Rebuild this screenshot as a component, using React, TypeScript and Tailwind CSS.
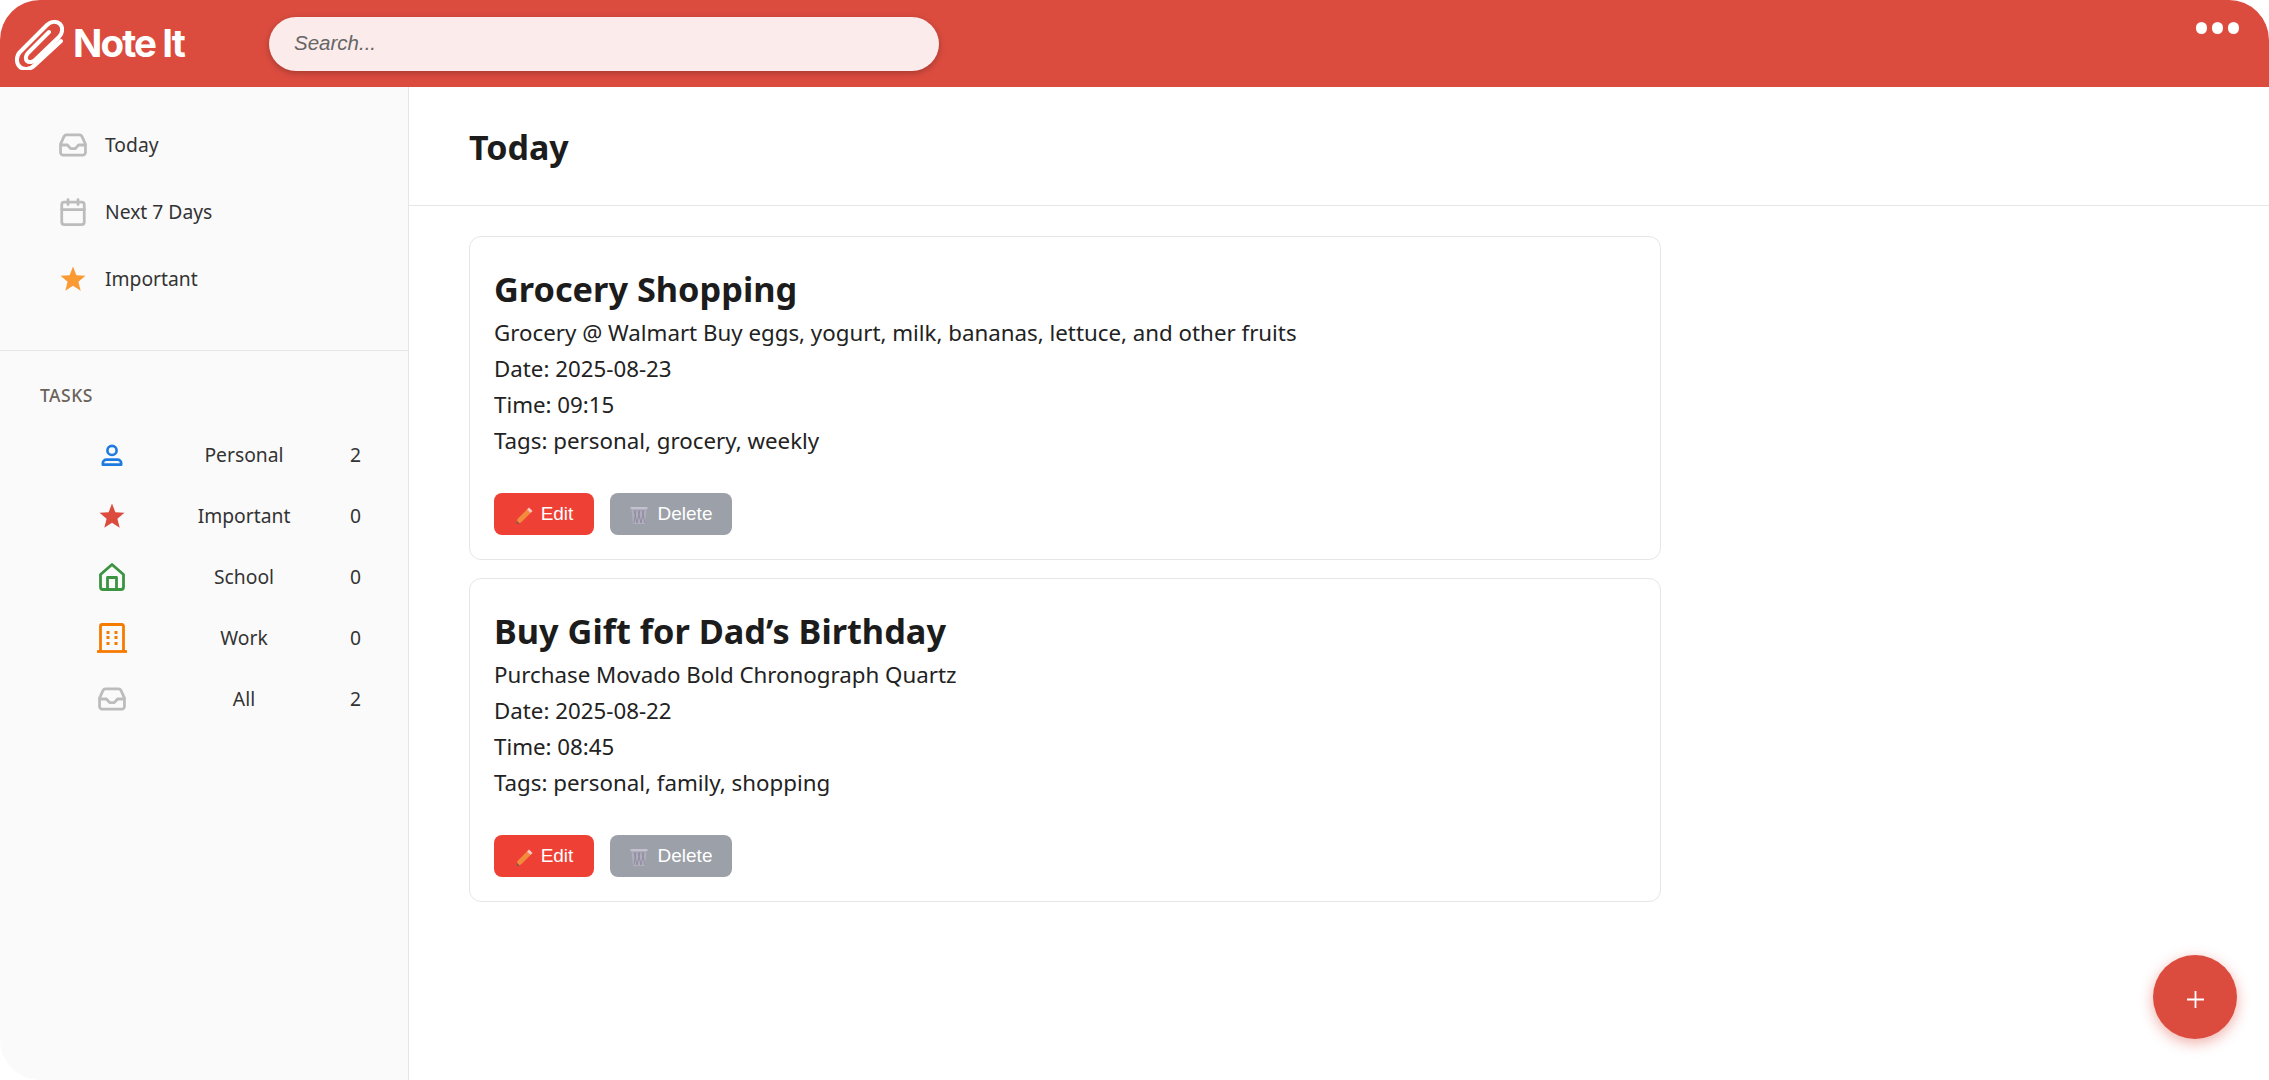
import React from 'react'
import { Calendar } from 'lucide-react'

const InboxIcon = ({ className }: { className: string }) => (
    <svg className={className} viewBox="0 0 30 26" fill="none" stroke="currentColor" strokeWidth={3} strokeLinecap="round" strokeLinejoin="round">
        <path d="M8 2h14a3 3 0 0 1 2.700 1.700L28.500 12v9a3 3 0 0 1-3 3h-21a3 3 0 0 1-3-3v-9L5.300 3.700A3 3 0 0 1 8 2z" />
        <path d="M2 13h7l3.500 4h5l3.500-4h7" />
    </svg>
)

const StarIcon = ({ className }: { className: string }) => (
    <svg className={className} viewBox="0 0 24 24" fill="currentColor">
        <path d="M12 .5l3.100 8 8.400.6-6.500 5.400 2.100 8.300L12 18.300l-7.100 4.500 2.100-8.300L.5 9.100l8.400-.6z" />
    </svg>
)

const PersonIcon = ({ className }: { className: string }) => (
    <svg className={className} viewBox="0 0 24 24" fill="none" stroke="currentColor" strokeWidth={2.900} strokeLinecap="round" strokeLinejoin="round">
        <circle cx="12" cy="7" r="5" />
        <path d="M2 22.500v-1.500a4 4 0 0 1 4-4h12a4 4 0 0 1 4 4v1.500z" />
    </svg>
)

const HouseIcon = ({ className }: { className: string }) => (
    <svg className={className} viewBox="0 0 26 28" fill="none" stroke="currentColor" strokeWidth={2.800} strokeLinejoin="round">
        <path d="M13 1.500L1.500 11.500V24a2.500 2.500 0 0 0 2.500 2.500h18a2.500 2.500 0 0 0 2.500-2.500V11.500z" />
        <path d="M8.500 26.500V14.500h9v12" />
    </svg>
)

const OfficeIcon = ({ className }: { className: string }) => (
    <svg className={className} viewBox="0 0 30 30" fill="none" stroke="currentColor" strokeWidth={2.800}>
        <path d="M0 28.500h30" />
        <path d="M3.500 28.500V3a1.500 1.500 0 0 1 1.500-1.500h20A1.500 1.500 0 0 1 26.500 3v25.500" />
        <path d="M9.500 9.500h3M17.500 9.500h3M9.500 14.500h3M17.500 14.500h3M9.500 20.500h3M17.500 20.500h3" strokeWidth={3} />
    </svg>
)

const PencilGlyph = () => (
    <svg className="w-[19px] h-[19px] mr-[7px] mt-[3px]" viewBox="0 0 19 19">
        <path d="M1.500 18l1-5L12 3.500l3.500 3.500L6 16.500z" fill="#f38b3c" />
        <path d="M12 3.500l2-2 3.500 3.500-2 2z" fill="#f9c9c2" />
        <path d="M1.500 18l.6-3 2.400 2.400z" fill="#6a5350" />
    </svg>
)

const BinGlyph = () => (
    <svg className="w-[18px] h-[19px] mr-[10px] mt-[2px]" viewBox="0 0 18 19" fill="none">
        <path d="M.5 2h17" stroke="#c3c1cf" strokeWidth={2} />
        <path d="M1.500 3l1.500 15h12l1.500-15z" fill="#b0aebc" />
        <path d="M4 4l3 13M8 4l3 13M12 4l3 13M6 4l-2 13M10 4l-3 13M14 4l-3 13" stroke="#8b899c" strokeWidth={0.9} />
    </svg>
)

const topLinks = [
    { label: 'Today', icon: <InboxIcon className="w-[28px] h-[24px] text-[#bcbcbc]" /> },
    { label: 'Next 7 Days', icon: <Calendar className="w-[30px] h-[30px] text-[#bcbcbc]" strokeWidth={2.200} /> },
    { label: 'Important', icon: <StarIcon className="w-[26px] h-[26px] text-[#fb9a32]" /> },
]

const taskLists = [
    { label: 'Personal', count: 2, icon: <PersonIcon className="w-[22px] h-[22px] text-[#1f7ae0]" /> },
    { label: 'Important', count: 0, icon: <StarIcon className="w-[26px] h-[26px] text-[#db4c3f]" /> },
    { label: 'School', count: 0, icon: <HouseIcon className="w-[26px] h-[28px] text-[#3a9440]" /> },
    { label: 'Work', count: 0, icon: <OfficeIcon className="w-[30px] h-[30px] text-[#f57c00]" /> },
    { label: 'All', count: 2, icon: <InboxIcon className="w-[28px] h-[24px] text-[#bcbcbc]" /> },
]

const notes = [
    {
        title: 'Grocery Shopping',
        body: 'Grocery @ Walmart Buy eggs, yogurt, milk, bananas, lettuce, and other fruits',
        date: '2025-08-23',
        time: '09:15',
        tags: 'personal, grocery, weekly',
    },
    {
        title: 'Buy Gift for Dad’s Birthday',
        body: 'Purchase Movado Bold Chronograph Quartz',
        date: '2025-08-22',
        time: '08:45',
        tags: 'personal, family, shopping',
    },
]

export default function App() {
    return (
        <div className="relative h-screen w-full overflow-hidden rounded-[40px] bg-white text-[#1c1c1c] font-['Noto_Sans',sans-serif]">
            <header className="h-[87px] bg-[#db4c3f] flex items-center pl-[14px] pr-[30px]">
                <div className="flex items-center w-[255px]">
                    <svg className="w-[50px] h-[52px]" viewBox="0 0 50 52" fill="none" stroke="white" strokeWidth={4} strokeLinecap="round" strokeLinejoin="round">
                        <path d="M47 23L21 47c-5 5-12 5-15.500 1.500S2 38 6 34L33 7c4-4 10-4 13-1s3 9-1 13L21 42c-2 2-6 3-8 1s-1-6 1-8L35 14" />
                    </svg>
                    <span className="ml-[9px] text-[38.500px] leading-none font-bold tracking-[-1.900px] text-white font-['Inter',sans-serif]">Note It</span>
                </div>
                <div className="w-[670px] h-[54px] rounded-full bg-[#fbeceb] shadow-[0_2px_6px_rgba(0,0,0,0.25)] flex items-center px-[25px] text-[20.500px] italic text-[#666666] font-['Liberation_Sans',sans-serif]">
                    Search...
                </div>
                <div className="ml-auto self-start mt-[22px] flex gap-[4.500px]">
                    <span className="w-[11.500px] h-[11.500px] rounded-full bg-white" />
                    <span className="w-[11.500px] h-[11.500px] rounded-full bg-white" />
                    <span className="w-[11.500px] h-[11.500px] rounded-full bg-white" />
                </div>
            </header>

            <div className="flex h-[993px]">
                <aside className="w-[409px] shrink-0 bg-[#fafafa] border-r border-[#e6e6e6]">
                    <nav className="h-[264px] border-b border-[#e6e6e6] pt-[43px] pl-[58px] flex flex-col gap-[37px]">
                        {topLinks.map((link) => (
                            <div key={link.label} className="flex items-center h-[30px] text-[19.300px] text-[#333333]">
                                <span className="w-[30px] flex justify-center mr-[17px]">{link.icon}</span>
                                {link.label}
                            </div>
                        ))}
                    </nav>
                    <div className="pt-[34px] px-[40px]">
                        <div className="text-[17.500px] leading-[20px] font-medium tracking-[0.500px] text-[#6b625c] mb-[35px]">TASKS</div>
                        <div className="flex flex-col gap-[31px]">
                            {taskLists.map((list) => (
                                <div key={list.label} className="flex items-center h-[30px] text-[19.300px] text-[#333333]">
                                    <span className="w-[30px] ml-[57px] flex justify-center">{list.icon}</span>
                                    <span className="flex-1 text-center ml-[13px]">{list.label}</span>
                                    <span className="w-[13px] mr-[7px] text-right">{list.count}</span>
                                </div>
                            ))}
                        </div>
                    </div>
                </aside>

                <main className="flex-1">
                    <div className="h-[119px] border-b border-[#e6e6e6] pl-[60px] pt-[37px]">
                        <h1 className="text-[34px] leading-[46px] font-bold text-[#1c1c1c]">Today</h1>
                    </div>
                    <div className="pl-[60px] pt-[30px] flex flex-col gap-[18px]">
                        {notes.map((note) => (
                            <article key={note.title} className="w-[1192px] h-[324px] rounded-[12px] border border-[#e6e6e6] bg-white px-[24px] pt-[28px]">
                                <h2 className="text-[34.300px] leading-[48px] font-bold mb-[2px]">{note.title}</h2>
                                <div className="text-[22.300px] leading-[36px] text-[#222222]">
                                    <p>{note.body}</p>
                                    <p>Date: {note.date}</p>
                                    <p>Time: {note.time}</p>
                                    <p>Tags: {note.tags}</p>
                                </div>
                                <div className="mt-[34px] flex gap-[16px] text-[19px] text-white font-['Liberation_Sans',sans-serif]">
                                    <button className="h-[42px] w-[100px] rounded-[8px] bg-[#ef4035] flex items-center justify-center">
                                        <PencilGlyph />Edit
                                    </button>
                                    <button className="h-[42px] w-[122px] rounded-[8px] bg-[#9ca0a8] flex items-center justify-center">
                                        <BinGlyph />Delete
                                    </button>
                                </div>
                            </article>
                        ))}
                    </div>
                </main>
            </div>

            <button className="absolute right-[32px] bottom-[41px] w-[84px] h-[84px] rounded-full bg-[#db4c3f] flex items-center justify-center shadow-[0_4px_14px_rgba(219,76,63,0.45)]">
                <svg className="w-[17px] h-[17px] mt-[5px]" viewBox="0 0 17 17" stroke="white" strokeWidth={1.8}>
                    <path d="M8.500 0v17M0 8.500h17" />
                </svg>
            </button>
        </div>
    )
}
